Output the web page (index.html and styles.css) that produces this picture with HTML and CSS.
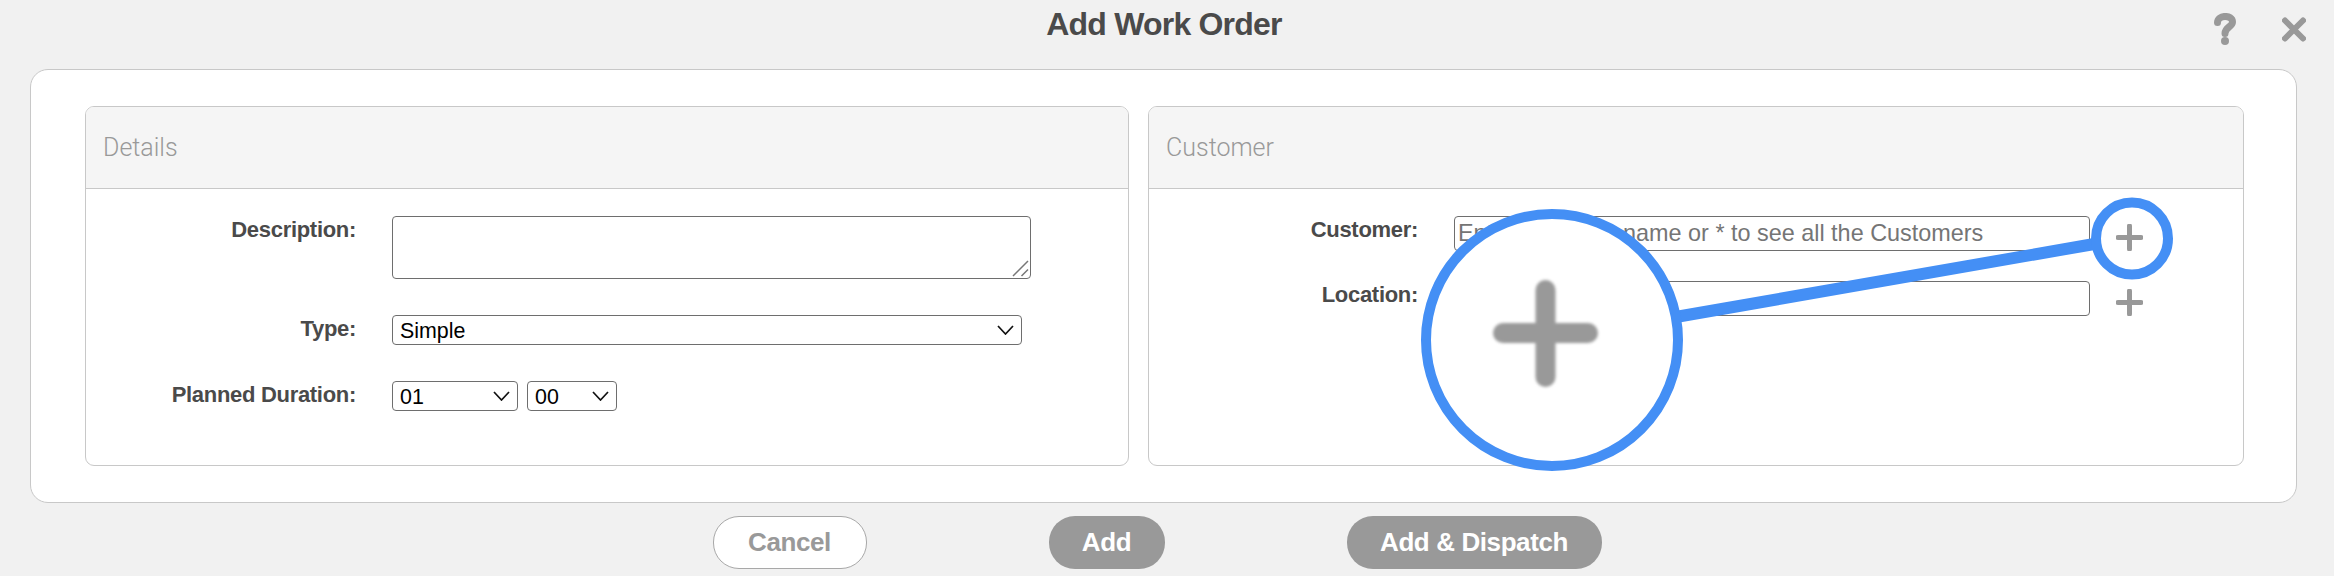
FILE: index.html
```html
<!DOCTYPE html>
<html lang='en-US'>
<head>
	<meta charset='UTF-8'>
	<title>Add Work Order</title>
	<link rel="stylesheet" href="styles.css">
</head>
<body>
<header class='top-bar'>
	<span></span>
	<h1 class='title'>Add Work Order</h1>
	<div class='top-icons'>
		<svg class='icon-help' viewBox='0 0 22 32' width='22' height='32'>
			<path d='M3.5 9.5C3.5 1.5 18.5 1.5 18.5 9C18.5 14 11 14 11 20.5' fill='none' stroke='#999' stroke-width='7' stroke-linecap='round'/>
			<circle cx='11' cy='28' r='4' fill='#999'/>
		</svg>
		<svg class='icon-close' viewBox='0 0 24 25' width='24' height='25'>
			<path d='M3 3.5L21 21.5M21 3.5L3 21.5' fill='none' stroke='#999' stroke-width='6' stroke-linecap='round'/>
		</svg>
	</div>
</header>

<main class='card'>
	<section class='panel'>
		<h2 class='panel-title'>Details</h2>
		<div class='panel-body details-form'>
			<label class='field-label'>Description:</label>
			<div class='description-wrap'>
				<textarea class='description'></textarea>
				<svg class='grip' viewBox='0 0 17 17' width='17' height='17'><path d='M1 16L16 1M9.5 16L16 9.5' fill='none' stroke='#777' stroke-width='1.5'/></svg>
			</div>

			<label class='field-label'>Type:</label>
			<div class='select-wrap type-select'>
				<select><option>Simple</option></select>
				<svg class='chevron' viewBox='0 0 17 10' width='17' height='10'><path d='M1 1L8.5 9L16 1' fill='none' stroke='#111' stroke-width='1.7'/></svg>
			</div>

			<label class='field-label'>Planned Duration:</label>
			<div class='duration'>
				<div class='select-wrap hours-select'>
					<select><option>01</option></select>
					<svg class='chevron' viewBox='0 0 17 10' width='17' height='10'><path d='M1 1L8.5 9L16 1' fill='none' stroke='#111' stroke-width='1.7'/></svg>
				</div>
				<div class='select-wrap minutes-select'>
					<select><option>00</option></select>
					<svg class='chevron' viewBox='0 0 17 10' width='17' height='10'><path d='M1 1L8.5 9L16 1' fill='none' stroke='#111' stroke-width='1.7'/></svg>
				</div>
			</div>
		</div>
	</section>

	<section class='panel'>
		<h2 class='panel-title'>Customer</h2>
		<div class='panel-body customer-form'>
			<label class='field-label'>Customer:</label>
			<input class='text-input' type='text' placeholder='Enter customer name or * to see all the Customers'>
			<svg class='icon-plus' viewBox='0 0 27 27' width='27' height='27'><path d='M13.5 2V25M2 13.5H25' fill='none' stroke='#999' stroke-width='5' stroke-linecap='round'/></svg>

			<label class='field-label'>Location:</label>
			<input class='text-input' type='text'>
			<svg class='icon-plus' viewBox='0 0 27 27' width='27' height='27'><path d='M13.5 2V25M2 13.5H25' fill='none' stroke='#999' stroke-width='5' stroke-linecap='round'/></svg>
		</div>
	</section>
</main>

<footer class='actions'>
	<button class='btn btn-cancel'>Cancel</button>
	<button class='btn btn-add'>Add</button>
	<button class='btn btn-dispatch'>Add &amp; Dispatch</button>
</footer>

<!-- callout drawn on top of the form -->
<svg class='callout' viewBox='0 0 2334 576' width='2334' height='576'>
	<line x1='1670' y1='318' x2='2100' y2='243' stroke='#448ff5' stroke-width='12'/>
	<circle cx='2132' cy='238.5' r='36' fill='none' stroke='#448ff5' stroke-width='10'/>
	<circle cx='1552' cy='340' r='126' fill='#fff' stroke='#448ff5' stroke-width='10'/>
	<path class='callout-plus' d='M1545.5 290V377M1503 333H1588' fill='none' stroke='#999' stroke-width='20' stroke-linecap='round'/>
</svg>
</body>
</html>
```

FILE: styles.css
```css
:root {
	--color-page: #f1f1f1;
	--color-text: #4a4a4a;
	--color-muted: #999;
	--color-line: #c8c8c8;
	--color-field: #6e6e6e;
}

html, body {
	margin: 0;
	height: 576px;
	overflow: hidden;
}

body {
	position: relative;
	font-family: "Liberation Sans", Arial, sans-serif;
	color: var(--color-text);
	background: var(--color-page);
}

/* top bar */

.top-bar {
	display: grid;
	grid-template-columns: 1fr auto 1fr;
	height: 69px;
	padding: 0 28px 0 22px;
	box-sizing: border-box;
}

.title {
	margin: 6px 0 0;
	font-size: 32px;
	line-height: 37px;
	letter-spacing: -.8px;
	font-weight: bold;
}

.top-icons {
	display: flex;
	justify-content: flex-end;
	align-items: flex-start;
	gap: 46px;
}

.icon-help {
	margin-top: 13px;
}

.icon-close {
	margin-top: 17px;
}

/* main card */

.card {
	display: grid;
	grid-template-columns: 1044px 1096px;
	gap: 19px;
	box-sizing: border-box;
	height: 434px;
	margin: 0 37px 0 30px;
	padding: 36px 52px 36px 54px;
	background: #fff;
	border: 1px solid var(--color-line);
	border-radius: 18px;
}

.panel {
	border: 1px solid var(--color-line);
	border-radius: 9px;
	overflow: hidden;
}

.panel-title {
	display: flex;
	align-items: center;
	box-sizing: border-box;
	height: 82px;
	margin: 0;
	padding: 0 0 0 17px;
	font-family: Roboto, "Liberation Sans", sans-serif;
	font-size: 25px;
	font-weight: 300;
	color: var(--color-muted);
	background: #f5f5f5;
	border-bottom: 1px solid var(--color-line);
}

.panel-body {
	display: grid;
	padding-top: 27px;
	column-gap: 36px;
	align-items: start;
}

.details-form {
	grid-template-columns: 270px auto;
	row-gap: 36px;
	justify-content: start;
}

.customer-form {
	grid-template-columns: 269px 636px 27px;
	row-gap: 30px;
	justify-content: start;
}

.field-label {
	font-size: 22px;
	line-height: 28px;
	letter-spacing: -.3px;
	font-weight: bold;
	text-align: right;
}

/* form fields */

.description-wrap {
	position: relative;
	height: 63px;
}

.description {
	display: block;
	box-sizing: border-box;
	width: 639px;
	height: 63px;
	margin: 0;
	resize: none;
	border: 1px solid var(--color-field);
	border-radius: 4px;
}

.grip {
	position: absolute;
	right: 2px;
	bottom: 2px;
	pointer-events: none;
}

.select-wrap {
	position: relative;
	height: 30px;
}

.select-wrap select {
	appearance: none;
	box-sizing: border-box;
	width: 100%;
	height: 100%;
	padding: 2px 0 0 7px;
	font-family: "Liberation Sans", Arial, sans-serif;
	font-size: 21.4px;
	color: #000;
	background: #fff;
	border: 1px solid var(--color-field);
	border-radius: 4px;
}

.chevron {
	position: absolute;
	top: 10px;
	right: 8px;
	pointer-events: none;
}

.type-select {
	width: 630px;
}

.duration {
	display: flex;
	gap: 9px;
}

.hours-select {
	width: 126px;
}

.minutes-select {
	width: 90px;
}

.text-input {
	box-sizing: border-box;
	width: 636px;
	height: 35px;
	margin: 0;
	padding: 0 0 0 3px;
	font-family: "Liberation Sans", Arial, sans-serif;
	font-size: 23.4px;
	background: #fff;
	border: 1px solid var(--color-field);
	border-radius: 4px;
}

.text-input::placeholder {
	color: #757575;
}

.icon-plus {
	margin: 8px 0 0 -10px;
}

/* footer buttons */

.actions {
	display: flex;
	justify-content: center;
	gap: 182px;
	padding: 13px 20px 0 0;
}

.btn {
	box-sizing: border-box;
	height: 53px;
	padding: 0;
	font-family: "Liberation Sans", Arial, sans-serif;
	font-size: 26px;
	letter-spacing: -.4px;
	font-weight: bold;
	border-radius: 26px;
	border: 0;
	color: #fff;
	background: var(--color-muted);
}

.btn-cancel {
	width: 154px;
	color: var(--color-muted);
	background: #fff;
	border: 1px solid #a8a8a8;
}

.btn-add {
	width: 116px;
}

.btn-dispatch {
	width: 255px;
}

/* callout */

.callout {
	position: absolute;
	top: 0;
	left: 0;
	pointer-events: none;
}

.callout-plus {
	filter: blur(1.5px);
}
```
